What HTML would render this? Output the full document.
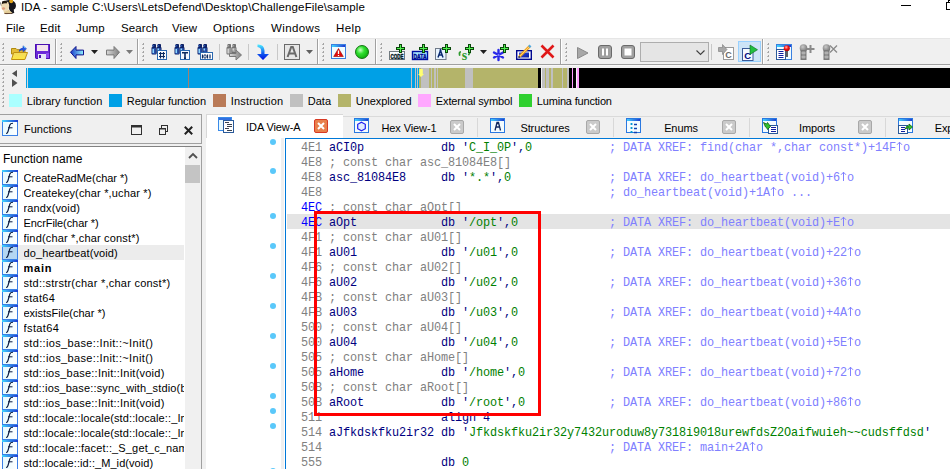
<!DOCTYPE html><html><head><meta charset="utf-8"><style>
*{margin:0;padding:0;box-sizing:border-box}
html,body{width:950px;height:469px;overflow:hidden;background:#f0f0f0;font-family:"Liberation Sans",sans-serif;color:#000}
.a{position:absolute}
.t{position:absolute;white-space:pre;line-height:1}
svg{position:absolute;overflow:visible}
.mono{font-family:"Liberation Mono",monospace}
</style></head><body><div class="a" style="left:0px;top:0px;width:950px;height:38px;background:#fff;"></div><svg style="left:0;top:0" width="18" height="16" viewBox="0 0 18 16"><path d="M5 1q5-2 9 0.5q2.5 2 1.8 5.5q-0.5 2-2 2.5q0 2 0.5 3.5l-3 0.5q-2-3-3-7z" fill="#16161c"/><path d="M0.5 2.5l1 3.5" stroke="#606060" stroke-width="1"/><ellipse cx="5.2" cy="6" rx="4" ry="5.2" fill="#eedab4"/><path d="M2 1.5q3-1.5 5.5 0l-1 2q-2-0.5-4.5 0.5z" fill="#201810"/><ellipse cx="3.5" cy="8.5" rx="1.6" ry="1.3" fill="#d88c70" opacity="0.8"/><path d="M3.5 11q3 1 5-1.5l4 3.5q-3 1.5-8 1z" fill="#e2cc96"/><path d="M4.5 13.5h8" stroke="#4a2a1a" stroke-width="0.8"/><circle cx="11.2" cy="1.3" r="1.9" fill="#e2a418"/></svg><div class="t" style="left:21px;top:1.5px;font-size:11.5px;color:#000;letter-spacing:0.15px">IDA - sample C:\Users\LetsDefend\Desktop\ChallengeFile\sample</div><div class="a" style="left:901px;top:5px;width:10px;height:1px;background:#000;"></div><svg style="left:946px;top:0" width="4" height="10"><rect x="2.5" y="0.5" width="8" height="7" fill="none" stroke="#000"/><rect x="0.5" y="2.5" width="8" height="7" fill="#fff" stroke="#000"/></svg><div class="t" style="left:6px;top:22.5px;font-size:11.5px;color:#000;letter-spacing:0.1px">File</div><div class="t" style="left:40px;top:22.5px;font-size:11.5px;color:#000;letter-spacing:0.2px">Edit</div><div class="t" style="left:76px;top:22.5px;font-size:11.5px;color:#000;letter-spacing:0.2px">Jump</div><div class="t" style="left:121px;top:22.5px;font-size:11.5px;color:#000;letter-spacing:0.1px">Search</div><div class="t" style="left:172px;top:22.5px;font-size:11.5px;color:#000;letter-spacing:0.1px">View</div><div class="t" style="left:213px;top:22.5px;font-size:11.5px;color:#000;letter-spacing:0.3px">Options</div><div class="t" style="left:271px;top:22.5px;font-size:11.5px;color:#000;letter-spacing:0.4px">Windows</div><div class="t" style="left:336px;top:22.5px;font-size:11.5px;color:#000;letter-spacing:0.45px">Help</div><div class="a" style="left:0px;top:38px;width:950px;height:1px;background:#e6e6e6;"></div><div class="a" style="left:0px;top:64px;width:950px;height:1px;background:#a0a0a0;"></div><div class="a" style="left:0px;top:65px;width:950px;height:1px;background:#f8f8f8;"></div><div class="a" style="left:3px;top:43px;width:1px;height:2px;background:#a4a4a4;"></div><div class="a" style="left:2px;top:44px;width:1px;height:1px;background:#b8b8b8;"></div><div class="a" style="left:3px;top:47px;width:1px;height:2px;background:#a4a4a4;"></div><div class="a" style="left:2px;top:48px;width:1px;height:1px;background:#b8b8b8;"></div><div class="a" style="left:3px;top:51px;width:1px;height:2px;background:#a4a4a4;"></div><div class="a" style="left:2px;top:52px;width:1px;height:1px;background:#b8b8b8;"></div><div class="a" style="left:3px;top:55px;width:1px;height:2px;background:#a4a4a4;"></div><div class="a" style="left:2px;top:56px;width:1px;height:1px;background:#b8b8b8;"></div><div class="a" style="left:3px;top:59px;width:1px;height:2px;background:#a4a4a4;"></div><div class="a" style="left:2px;top:60px;width:1px;height:1px;background:#b8b8b8;"></div><div class="a" style="left:61px;top:43px;width:1px;height:2px;background:#a4a4a4;"></div><div class="a" style="left:60px;top:44px;width:1px;height:1px;background:#b8b8b8;"></div><div class="a" style="left:61px;top:47px;width:1px;height:2px;background:#a4a4a4;"></div><div class="a" style="left:60px;top:48px;width:1px;height:1px;background:#b8b8b8;"></div><div class="a" style="left:61px;top:51px;width:1px;height:2px;background:#a4a4a4;"></div><div class="a" style="left:60px;top:52px;width:1px;height:1px;background:#b8b8b8;"></div><div class="a" style="left:61px;top:55px;width:1px;height:2px;background:#a4a4a4;"></div><div class="a" style="left:60px;top:56px;width:1px;height:1px;background:#b8b8b8;"></div><div class="a" style="left:61px;top:59px;width:1px;height:2px;background:#a4a4a4;"></div><div class="a" style="left:60px;top:60px;width:1px;height:1px;background:#b8b8b8;"></div><div class="a" style="left:143px;top:43px;width:1px;height:2px;background:#a4a4a4;"></div><div class="a" style="left:142px;top:44px;width:1px;height:1px;background:#b8b8b8;"></div><div class="a" style="left:143px;top:47px;width:1px;height:2px;background:#a4a4a4;"></div><div class="a" style="left:142px;top:48px;width:1px;height:1px;background:#b8b8b8;"></div><div class="a" style="left:143px;top:51px;width:1px;height:2px;background:#a4a4a4;"></div><div class="a" style="left:142px;top:52px;width:1px;height:1px;background:#b8b8b8;"></div><div class="a" style="left:143px;top:55px;width:1px;height:2px;background:#a4a4a4;"></div><div class="a" style="left:142px;top:56px;width:1px;height:1px;background:#b8b8b8;"></div><div class="a" style="left:143px;top:59px;width:1px;height:2px;background:#a4a4a4;"></div><div class="a" style="left:142px;top:60px;width:1px;height:1px;background:#b8b8b8;"></div><div class="a" style="left:323px;top:43px;width:1px;height:2px;background:#a4a4a4;"></div><div class="a" style="left:322px;top:44px;width:1px;height:1px;background:#b8b8b8;"></div><div class="a" style="left:323px;top:47px;width:1px;height:2px;background:#a4a4a4;"></div><div class="a" style="left:322px;top:48px;width:1px;height:1px;background:#b8b8b8;"></div><div class="a" style="left:323px;top:51px;width:1px;height:2px;background:#a4a4a4;"></div><div class="a" style="left:322px;top:52px;width:1px;height:1px;background:#b8b8b8;"></div><div class="a" style="left:323px;top:55px;width:1px;height:2px;background:#a4a4a4;"></div><div class="a" style="left:322px;top:56px;width:1px;height:1px;background:#b8b8b8;"></div><div class="a" style="left:323px;top:59px;width:1px;height:2px;background:#a4a4a4;"></div><div class="a" style="left:322px;top:60px;width:1px;height:1px;background:#b8b8b8;"></div><div class="a" style="left:381px;top:43px;width:1px;height:2px;background:#a4a4a4;"></div><div class="a" style="left:380px;top:44px;width:1px;height:1px;background:#b8b8b8;"></div><div class="a" style="left:381px;top:47px;width:1px;height:2px;background:#a4a4a4;"></div><div class="a" style="left:380px;top:48px;width:1px;height:1px;background:#b8b8b8;"></div><div class="a" style="left:381px;top:51px;width:1px;height:2px;background:#a4a4a4;"></div><div class="a" style="left:380px;top:52px;width:1px;height:1px;background:#b8b8b8;"></div><div class="a" style="left:381px;top:55px;width:1px;height:2px;background:#a4a4a4;"></div><div class="a" style="left:380px;top:56px;width:1px;height:1px;background:#b8b8b8;"></div><div class="a" style="left:381px;top:59px;width:1px;height:2px;background:#a4a4a4;"></div><div class="a" style="left:380px;top:60px;width:1px;height:1px;background:#b8b8b8;"></div><div class="a" style="left:566px;top:43px;width:1px;height:2px;background:#a4a4a4;"></div><div class="a" style="left:565px;top:44px;width:1px;height:1px;background:#b8b8b8;"></div><div class="a" style="left:566px;top:47px;width:1px;height:2px;background:#a4a4a4;"></div><div class="a" style="left:565px;top:48px;width:1px;height:1px;background:#b8b8b8;"></div><div class="a" style="left:566px;top:51px;width:1px;height:2px;background:#a4a4a4;"></div><div class="a" style="left:565px;top:52px;width:1px;height:1px;background:#b8b8b8;"></div><div class="a" style="left:566px;top:55px;width:1px;height:2px;background:#a4a4a4;"></div><div class="a" style="left:565px;top:56px;width:1px;height:1px;background:#b8b8b8;"></div><div class="a" style="left:566px;top:59px;width:1px;height:2px;background:#a4a4a4;"></div><div class="a" style="left:565px;top:60px;width:1px;height:1px;background:#b8b8b8;"></div><div class="a" style="left:768px;top:43px;width:1px;height:2px;background:#a4a4a4;"></div><div class="a" style="left:767px;top:44px;width:1px;height:1px;background:#b8b8b8;"></div><div class="a" style="left:768px;top:47px;width:1px;height:2px;background:#a4a4a4;"></div><div class="a" style="left:767px;top:48px;width:1px;height:1px;background:#b8b8b8;"></div><div class="a" style="left:768px;top:51px;width:1px;height:2px;background:#a4a4a4;"></div><div class="a" style="left:767px;top:52px;width:1px;height:1px;background:#b8b8b8;"></div><div class="a" style="left:768px;top:55px;width:1px;height:2px;background:#a4a4a4;"></div><div class="a" style="left:767px;top:56px;width:1px;height:1px;background:#b8b8b8;"></div><div class="a" style="left:768px;top:59px;width:1px;height:2px;background:#a4a4a4;"></div><div class="a" style="left:767px;top:60px;width:1px;height:1px;background:#b8b8b8;"></div><div class="a" style="left:55px;top:39px;width:1px;height:25px;background:#a0a0a0;"></div><div class="a" style="left:56px;top:39px;width:1px;height:25px;background:#ffffff;"></div><div class="a" style="left:137px;top:39px;width:1px;height:25px;background:#a0a0a0;"></div><div class="a" style="left:138px;top:39px;width:1px;height:25px;background:#ffffff;"></div><div class="a" style="left:317px;top:39px;width:1px;height:25px;background:#a0a0a0;"></div><div class="a" style="left:318px;top:39px;width:1px;height:25px;background:#ffffff;"></div><div class="a" style="left:375px;top:39px;width:1px;height:25px;background:#a0a0a0;"></div><div class="a" style="left:376px;top:39px;width:1px;height:25px;background:#ffffff;"></div><div class="a" style="left:560px;top:39px;width:1px;height:25px;background:#a0a0a0;"></div><div class="a" style="left:561px;top:39px;width:1px;height:25px;background:#ffffff;"></div><div class="a" style="left:762px;top:39px;width:1px;height:25px;background:#a0a0a0;"></div><div class="a" style="left:763px;top:39px;width:1px;height:25px;background:#ffffff;"></div><div class="a" style="left:219px;top:44px;width:1px;height:16px;background:#c8c8c8;"></div><div class="a" style="left:248px;top:44px;width:1px;height:16px;background:#c8c8c8;"></div><div class="a" style="left:277px;top:44px;width:1px;height:16px;background:#c8c8c8;"></div><div class="a" style="left:711px;top:44px;width:1px;height:16px;background:#c8c8c8;"></div><svg style="left:0;top:0" width="0" height="0"><defs><linearGradient id="gBack" x1="0" x2="1"><stop offset="0" stop-color="#1838c8"/><stop offset="1" stop-color="#90f4ff"/></linearGradient><linearGradient id="gFwd" x1="0" x2="1"><stop offset="0" stop-color="#d8d8d8"/><stop offset="1" stop-color="#808080"/></linearGradient><linearGradient id="gDown" x1="0" y1="0" x2="0" y2="1"><stop offset="0" stop-color="#50f0ff"/><stop offset="0.55" stop-color="#1060f0"/><stop offset="1" stop-color="#0010e0"/></linearGradient><linearGradient id="gTb" x1="0" x2="1"><stop offset="0" stop-color="#40d8ff"/><stop offset="1" stop-color="#2038d0"/></linearGradient><linearGradient id="gFold" x1="0" y1="0" x2="0" y2="1"><stop offset="0" stop-color="#f0d860"/><stop offset="1" stop-color="#ffe840"/></linearGradient><linearGradient id="gPen" x1="0" y1="0" x2="1" y2="1"><stop offset="0" stop-color="#3050e0"/><stop offset="1" stop-color="#0818a0"/></linearGradient><linearGradient id="gFi" x1="0" x2="1"><stop offset="0" stop-color="#e4faff"/><stop offset="1" stop-color="#ffffff"/></linearGradient><radialGradient id="gGreen" cx="0.38" cy="0.35" r="0.65"><stop offset="0" stop-color="#c8ffc0"/><stop offset="0.45" stop-color="#30e030"/><stop offset="1" stop-color="#10b010"/></radialGradient><radialGradient id="gPin" cx="0.4" cy="0.35" r="0.7"><stop offset="0" stop-color="#c8c8c8"/><stop offset="1" stop-color="#707070"/></radialGradient><radialGradient id="gRed" cx="0.4" cy="0.35" r="0.7"><stop offset="0" stop-color="#ffb0b0"/><stop offset="0.5" stop-color="#f01010"/><stop offset="1" stop-color="#a00000"/></radialGradient></defs></svg><svg style="left:11px;top:44px" width="17" height="16" viewBox="0 0 17 16"><path d="M0.5 4.5h4.5l1 1.2h8v4.3h-13.5z" fill="#e4bc38" stroke="#b08a10"/><path d="M0.5 15.5l2.2-7h13.8l-2.6 7z" fill="url(#gFold)" stroke="#c09010" stroke-linejoin="round"/><path d="M8 7.5q0.5-3.2 4-3.4v-2.3l3.5 3-3.5 3v-2q-2.5 0-4 1.7z" fill="#2858e8" stroke="#1030b0" stroke-width="0.5"/><path d="M12.5 2.5l1.8 1.5" stroke="#60e0ff" stroke-width="1"/></svg><svg style="left:35px;top:44px" width="16" height="16" viewBox="0 0 16 16"><path d="M0 0h15v15h-14l-1-1z" fill="#6a28d8"/><path d="M0.5 0.5h14v14h-13l-1-1z" fill="none" stroke="#4a10b0"/><rect x="2" y="1" width="11" height="6" fill="#f4e4ec"/><rect x="3" y="10" width="8" height="5" fill="#e4e4f8"/><rect x="4" y="11" width="2" height="3" fill="#4a10b0"/><rect x="11" y="9" width="3" height="5" fill="#8a48f0"/></svg><svg style="left:70px;top:46px" width="14" height="13" viewBox="0 0 14 13"><path d="M0.5 6.2l5.5-5.7v3.6h7.5v4.8h-7.5v3.6z" fill="url(#gBack)" stroke="#10108a" stroke-linejoin="round"/></svg><svg style="left:91px;top:50px" width="8" height="5" viewBox="0 0 8 5"><path d="M0 0h7l-3.5 4z" fill="#202020"/></svg><svg style="left:106px;top:46px" width="14" height="13" viewBox="0 0 14 13"><path d="M13.5 6.2l-5.5-5.7v3.6h-7.5v4.8h7.5v3.6z" fill="url(#gFwd)" stroke="#787878" stroke-linejoin="round"/></svg><svg style="left:126px;top:50px" width="8" height="5" viewBox="0 0 8 5"><path d="M0 0h7l-3.5 4z" fill="#7a7a7a"/></svg><svg style="left:151px;top:44px" width="16" height="16" viewBox="0 0 16 16"><rect x="1.5" y="0" width="3.5" height="3.5" rx="0.8" fill="#0c2064"/><rect x="6.5" y="0" width="3.5" height="3.5" rx="0.8" fill="#0c2064"/><rect x="1.2" y="1" width="2" height="1.5" fill="#2850a8"/><rect x="6.2" y="1" width="2" height="1.5" fill="#2850a8"/><rect x="0.5" y="3" width="5" height="7.5" rx="1" fill="#0c2064"/><rect x="5.5" y="3" width="5" height="7" rx="1" fill="#0c2064"/><rect x="1.3" y="4" width="3.5" height="6" rx="0.5" fill="#2850a8"/><rect x="6.3" y="4" width="3.5" height="4" rx="0.5" fill="#2850a8"/><rect x="1.5" y="5" width="1.5" height="4" fill="#90d8ff"/><rect x="6.5" y="4.5" width="1.5" height="2" fill="#90d8ff"/><rect x="6.5" y="6.5" width="9" height="9" fill="#fff" stroke="#2a68b0"/><path d="M9.5 8v6.5M12.5 8v6.5M8 9.5h6M8 12.5h6" stroke="#0c2a60" stroke-width="1.2"/></svg><svg style="left:174px;top:44px" width="16" height="16" viewBox="0 0 16 16"><rect x="1.5" y="0" width="3.5" height="3.5" rx="0.8" fill="#0c2064"/><rect x="6.5" y="0" width="3.5" height="3.5" rx="0.8" fill="#0c2064"/><rect x="1.2" y="1" width="2" height="1.5" fill="#2850a8"/><rect x="6.2" y="1" width="2" height="1.5" fill="#2850a8"/><rect x="0.5" y="3" width="5" height="7.5" rx="1" fill="#0c2064"/><rect x="5.5" y="3" width="5" height="7" rx="1" fill="#0c2064"/><rect x="1.3" y="4" width="3.5" height="6" rx="0.5" fill="#2850a8"/><rect x="6.3" y="4" width="3.5" height="4" rx="0.5" fill="#2850a8"/><rect x="1.5" y="5" width="1.5" height="4" fill="#90d8ff"/><rect x="6.5" y="4.5" width="1.5" height="2" fill="#90d8ff"/><rect x="6.5" y="6.5" width="9" height="9" fill="#f4f8ff" stroke="#2a68b0"/><path d="M8 8.8h6M11 8.8v5.5M10 14.3h2" stroke="#0c2a60" stroke-width="1.6"/></svg><svg style="left:197px;top:44px" width="16" height="16" viewBox="0 0 16 16"><rect x="1.5" y="0" width="3.5" height="3.5" rx="0.8" fill="#0c2064"/><rect x="6.5" y="0" width="3.5" height="3.5" rx="0.8" fill="#0c2064"/><rect x="1.2" y="1" width="2" height="1.5" fill="#2850a8"/><rect x="6.2" y="1" width="2" height="1.5" fill="#2850a8"/><rect x="0.5" y="3" width="5" height="7.5" rx="1" fill="#0c2064"/><rect x="5.5" y="3" width="5" height="7" rx="1" fill="#0c2064"/><rect x="1.3" y="4" width="3.5" height="6" rx="0.5" fill="#2850a8"/><rect x="6.3" y="4" width="3.5" height="4" rx="0.5" fill="#2850a8"/><rect x="1.5" y="5" width="1.5" height="4" fill="#90d8ff"/><rect x="6.5" y="4.5" width="1.5" height="2" fill="#90d8ff"/><rect x="3.5" y="8.5" width="12" height="7" fill="#fff" stroke="#2a68b0"/><path d="M5.5 10.5v4M10.5 10.5v4M13 10.5v4" stroke="#0c2a60" stroke-width="1.2"/><ellipse cx="8" cy="12.5" rx="1.2" ry="1.8" fill="none" stroke="#0c2a60" stroke-width="1"/></svg><svg style="left:226px;top:44px" width="16" height="16" viewBox="0 0 16 16"><rect x="1.5" y="0" width="3.5" height="3.5" rx="0.8" fill="#707070"/><rect x="6.5" y="0" width="3.5" height="3.5" rx="0.8" fill="#707070"/><rect x="1.2" y="1" width="2" height="1.5" fill="#a0a0a0"/><rect x="6.2" y="1" width="2" height="1.5" fill="#a0a0a0"/><rect x="0.5" y="3" width="5" height="7.5" rx="1" fill="#707070"/><rect x="5.5" y="3" width="5" height="7" rx="1" fill="#707070"/><rect x="1.3" y="4" width="3.5" height="6" rx="0.5" fill="#a0a0a0"/><rect x="6.3" y="4" width="3.5" height="4" rx="0.5" fill="#a0a0a0"/><rect x="1.5" y="5" width="1.5" height="4" fill="#d0d0d0"/><rect x="6.5" y="4.5" width="1.5" height="2" fill="#d0d0d0"/><path d="M3.5 9.5h6.5v-3.5l5.5 5-5.5 5v-3.5h-6.5z" fill="url(#gFwd)" stroke="#787878" stroke-linejoin="round"/></svg><svg style="left:257px;top:44px" width="13" height="16" viewBox="0 0 13 16"><path d="M0.5 0.5q6.5-0.5 7 6v3.5h4.5l-6 6-6-6h4.2v-3q0-3.5-3.7-4z" fill="url(#gDown)"/></svg><svg style="left:284px;top:44px" width="16" height="16" viewBox="0 0 16 16"><rect x="0.5" y="0.5" width="15" height="15" fill="#e6e6e6" stroke="#6a6a6a"/><path d="M3.6 13l3.6-10h1.6l3.6 10M5.2 9.6h5.6" stroke="#6a6a6a" stroke-width="2" fill="none"/></svg><svg style="left:306px;top:50px" width="8" height="5" viewBox="0 0 8 5"><path d="M0 0h7l-3.5 4z" fill="#606060"/></svg><svg style="left:331px;top:44px" width="16" height="15" viewBox="0 0 16 15"><rect x="0.5" y="0.5" width="14" height="14" fill="#f0fcff" stroke="#3a80e0"/><rect x="1" y="1" width="13" height="2" fill="url(#gTb)"/><path d="M7.5 4.5l4.8 8h-9.6z" fill="#e00c0c" stroke="#a00000" stroke-width="0.6" stroke-linejoin="round"/><path d="M7.5 6.5v3.5M7.5 11v1" stroke="#fff" stroke-width="1.3"/></svg><svg style="left:355px;top:45px" width="14" height="14" viewBox="0 0 14 14"><circle cx="7" cy="7" r="6.5" fill="url(#gGreen)" stroke="#0a6a0a" stroke-width="0.9"/></svg><svg style="left:389px;top:44px" width="17" height="16" viewBox="0 0 17 16"><rect x="0.5" y="7.5" width="15" height="8" fill="#f8fcff" stroke="#707a80"/><text x="8" y="14.5" font-size="8" font-weight="bold" text-anchor="middle" fill="#062028" stroke="#062028" stroke-width="0.5" font-family="Liberation Sans" textLength="13" lengthAdjust="spacingAndGlyphs">CODE</text><rect x="10" y="0" width="3" height="9" fill="#0a480a"/><rect x="7" y="3" width="9" height="3" fill="#0a480a"/><rect x="11" y="1" width="1" height="7" fill="#50f050"/><rect x="8" y="4" width="7" height="1" fill="#50f050"/></svg><svg style="left:412px;top:44px" width="17" height="16" viewBox="0 0 17 16"><rect x="0.5" y="7.5" width="15" height="8" fill="#a8e8ff" stroke="#0010a0" stroke-width="1.4"/><text x="8" y="14.5" font-size="8" font-weight="bold" text-anchor="middle" fill="#000890" stroke="#000890" stroke-width="0.5" font-family="Liberation Sans" textLength="13" lengthAdjust="spacingAndGlyphs">DATA</text><rect x="10" y="0" width="3" height="9" fill="#0a480a"/><rect x="7" y="3" width="9" height="3" fill="#0a480a"/><rect x="11" y="1" width="1" height="7" fill="#50f050"/><rect x="8" y="4" width="7" height="1" fill="#50f050"/></svg><svg style="left:435px;top:44px" width="17" height="16" viewBox="0 0 17 16"><rect x="0.5" y="4.5" width="10.5" height="11" fill="#e8f4ff" stroke="#707a88"/><path d="M3 13.5l2.5-7 2.5 7M3.8 11h3.4" stroke="#0c2a70" stroke-width="1.5" fill="none"/><circle cx="5.5" cy="6" r="1" fill="#0c2a70"/><rect x="10" y="0" width="3" height="9" fill="#0a480a"/><rect x="7" y="3" width="9" height="3" fill="#0a480a"/><rect x="11" y="1" width="1" height="7" fill="#50f050"/><rect x="8" y="4" width="7" height="1" fill="#50f050"/></svg><svg style="left:458px;top:44px" width="17" height="16" viewBox="0 0 17 16"><text x="6.5" y="16" font-size="14" font-weight="bold" text-anchor="middle" fill="#2e9a2e" font-family="Liberation Serif">s</text><path d="M2.2 8q-1.3 0.8-0.6 3" stroke="#2e9a2e" stroke-width="1.8" fill="none" stroke-linecap="round"/><path d="M11.6 7.5q0.8 1.8-0.8 3" stroke="#2e9a2e" stroke-width="1.8" fill="none" stroke-linecap="round"/><rect x="10" y="0" width="3" height="9" fill="#0a480a"/><rect x="7" y="3" width="9" height="3" fill="#0a480a"/><rect x="11" y="1" width="1" height="7" fill="#50f050"/><rect x="8" y="4" width="7" height="1" fill="#50f050"/></svg><svg style="left:480px;top:50px" width="8" height="5" viewBox="0 0 8 5"><path d="M0 0h7l-3.5 4z" fill="#202020"/></svg><svg style="left:493px;top:44px" width="17" height="16" viewBox="0 0 17 16"><path d="M5.5 6v10M1 8.5l9 5M1 13.5l9-5" stroke="#2a2ae8" stroke-width="2.4" stroke-linecap="round"/><circle cx="5.5" cy="11" r="1" fill="#8080ff"/><rect x="10" y="0" width="3" height="9" fill="#0a480a"/><rect x="7" y="3" width="9" height="3" fill="#0a480a"/><rect x="11" y="1" width="1" height="7" fill="#50f050"/><rect x="8" y="4" width="7" height="1" fill="#50f050"/></svg><svg style="left:516px;top:44px" width="16" height="16" viewBox="0 0 16 16"><rect x="0.7" y="6.7" width="14.6" height="8.6" fill="#fff" stroke="#000890" stroke-width="1.4"/><rect x="3" y="8.5" width="10" height="5" fill="url(#gPen)"/><path d="M3.5 12.5l10-10" stroke="#f0a020" stroke-width="2.6"/><path d="M3.5 12.5l10-10" stroke="#ffe080" stroke-width="0.8"/><path d="M13 3l1.5-1.5" stroke="#50a8e0" stroke-width="2.6"/><path d="M2.5 13.5l1-1" stroke="#000" stroke-width="1.5"/></svg><svg style="left:540px;top:44px" width="15" height="15" viewBox="0 0 15 15"><path d="M1.5 1.5l12 12M13.5 1.5l-12 12" stroke="#e01818" stroke-width="2.6"/></svg><svg style="left:577px;top:47px" width="12" height="12" viewBox="0 0 12 12"><path d="M0.5 0.5l10.5 5.5-10.5 5.5z" fill="#a8a8a8" stroke="#8a8a8a"/></svg><svg style="left:598px;top:45px" width="14" height="14" viewBox="0 0 14 14"><rect x="0.5" y="0.5" width="13" height="13" rx="2.5" fill="#a0a0a0" stroke="#6a6a6a"/><rect x="4" y="3.5" width="2" height="7" fill="#fff"/><rect x="8" y="3.5" width="2" height="7" fill="#fff"/></svg><svg style="left:621px;top:45px" width="14" height="14" viewBox="0 0 14 14"><rect x="0.5" y="0.5" width="13" height="13" rx="2.5" fill="#a0a0a0" stroke="#6a6a6a"/><rect x="3.5" y="3.5" width="7" height="7" fill="#fff"/></svg><div class="a" style="left:640px;top:42px;width:69px;height:20px;background:#e5e5e5;border:1px solid #adadad"></div><svg style="left:696px;top:50px" width="9" height="6" viewBox="0 0 9 6"><path d="M0.5 0.5l4 4 4-4" stroke="#404040" fill="none" stroke-width="1.1"/></svg><svg style="left:718px;top:44px" width="16" height="16" viewBox="0 0 16 16"><rect x="5.5" y="3.5" width="10" height="12" fill="#fff" stroke="#9a9a9a"/><text x="10.5" y="13.5" font-size="9" font-weight="bold" text-anchor="middle" fill="#6a6a6a" font-family="Liberation Sans">C</text><path d="M0.5 3.5h4v-3l4.5 5-4.5 5v-3h-4z" fill="#a8a8a8" stroke="#787878" stroke-width="0.6"/></svg><div class="a" style="left:738px;top:41px;width:23px;height:21px;background:#cce4f7;border:1px solid #99d1ff"></div><svg style="left:742px;top:44px" width="16" height="17" viewBox="0 0 16 17"><rect x="0.5" y="4.5" width="10.5" height="12" fill="#f4faff" stroke="#3a5a98"/><text x="5.8" y="14.5" font-size="9.5" font-weight="bold" text-anchor="middle" fill="#000a80" font-family="Liberation Sans">C</text><path d="M8 1v9.5l7.5-4.75z" fill="#20c040" stroke="#0a6a1a" stroke-width="0.6"/></svg><svg style="left:776px;top:44px" width="16" height="16" viewBox="0 0 16 16"><rect x="0.5" y="0.5" width="15" height="15" fill="#f0fcff" stroke="#3a80e0"/><rect x="1" y="1" width="14" height="2" fill="url(#gTb)"/><rect x="0.5" y="5.5" width="9" height="10" fill="#fff" stroke="#2a5a9a"/><path d="M2.5 7.5h5M2.5 9.5h5M2.5 11.5h5M2.5 13.5h5" stroke="#1020a0"/><rect x="9.5" y="6" width="2.5" height="7" fill="#606060"/><circle cx="10.8" cy="4.2" r="3" fill="url(#gRed)"/></svg><svg style="left:799px;top:44px" width="17" height="16" viewBox="0 0 17 16"><circle cx="4.5" cy="4" r="3.8" fill="url(#gPin)"/><rect x="1.5" y="6" width="6" height="10" fill="#7a7a7a"/><rect x="2.5" y="7.5" width="4" height="3" rx="1" fill="#b0b0b0"/><rect x="2.5" y="11.5" width="4" height="3" rx="1" fill="#b0b0b0"/><path d="M11.5 1v8M7.5 5h8" stroke="#8a8a8a" stroke-width="2"/></svg><svg style="left:822px;top:44px" width="17" height="16" viewBox="0 0 17 16"><circle cx="4.5" cy="4" r="3.8" fill="url(#gPin)"/><rect x="1.5" y="6" width="6" height="10" fill="#7a7a7a"/><rect x="2.5" y="7.5" width="4" height="3" rx="1" fill="#b0b0b0"/><rect x="2.5" y="11.5" width="4" height="3" rx="1" fill="#b0b0b0"/><path d="M8 1.5l7 7M15 1.5l-7 7" stroke="#8a8a8a" stroke-width="1.3"/></svg><svg style="left:11px;top:70px" width="8" height="18"><path d="M6 0v7l-5-3.5z" fill="#505050"/><path d="M1 9v8l5.5-4z" fill="#505050"/></svg><div class="a" style="left:3px;top:69px;width:1px;height:2px;background:#a4a4a4;"></div><div class="a" style="left:2px;top:70px;width:1px;height:1px;background:#b8b8b8;"></div><div class="a" style="left:3px;top:73px;width:1px;height:2px;background:#a4a4a4;"></div><div class="a" style="left:2px;top:74px;width:1px;height:1px;background:#b8b8b8;"></div><div class="a" style="left:3px;top:77px;width:1px;height:2px;background:#a4a4a4;"></div><div class="a" style="left:2px;top:78px;width:1px;height:1px;background:#b8b8b8;"></div><div class="a" style="left:3px;top:81px;width:1px;height:2px;background:#a4a4a4;"></div><div class="a" style="left:2px;top:82px;width:1px;height:1px;background:#b8b8b8;"></div><div class="a" style="left:3px;top:85px;width:1px;height:2px;background:#a4a4a4;"></div><div class="a" style="left:2px;top:86px;width:1px;height:1px;background:#b8b8b8;"></div><div class="a" style="left:3px;top:89px;width:1px;height:2px;background:#a4a4a4;"></div><div class="a" style="left:2px;top:90px;width:1px;height:1px;background:#b8b8b8;"></div><div class="a" style="left:3px;top:93px;width:1px;height:2px;background:#a4a4a4;"></div><div class="a" style="left:2px;top:94px;width:1px;height:1px;background:#b8b8b8;"></div><div class="a" style="left:3px;top:97px;width:1px;height:2px;background:#a4a4a4;"></div><div class="a" style="left:2px;top:98px;width:1px;height:1px;background:#b8b8b8;"></div><div class="a" style="left:3px;top:101px;width:1px;height:2px;background:#a4a4a4;"></div><div class="a" style="left:2px;top:102px;width:1px;height:1px;background:#b8b8b8;"></div><div class="a" style="left:3px;top:105px;width:1px;height:2px;background:#a4a4a4;"></div><div class="a" style="left:2px;top:106px;width:1px;height:1px;background:#b8b8b8;"></div><div class="a" style="left:26px;top:68px;width:1px;height:20px;background:#00a0e6;"></div><div class="a" style="left:27px;top:68px;width:1px;height:20px;background:#d8d8d8;"></div><div class="a" style="left:28px;top:68px;width:160px;height:20px;background:#00a0e6;"></div><div class="a" style="left:188px;top:68px;width:1px;height:20px;background:#a08070;"></div><div class="a" style="left:189px;top:68px;width:222px;height:20px;background:#00a0e6;"></div><div class="a" style="left:411px;top:68px;width:1px;height:20px;background:#c0c0c0;"></div><div class="a" style="left:412px;top:68px;width:3px;height:20px;background:#00a0e6;"></div><div class="a" style="left:415px;top:68px;width:1px;height:20px;background:#c0c0c0;"></div><div class="a" style="left:416px;top:68px;width:1px;height:20px;background:#00a0e6;"></div><div class="a" style="left:417px;top:68px;width:1px;height:20px;background:#c0c0c0;"></div><div class="a" style="left:418px;top:68px;width:1px;height:20px;background:#00a0e6;"></div><div class="a" style="left:419px;top:68px;width:2px;height:20px;background:#b4b46a;"></div><div class="a" style="left:421px;top:68px;width:8px;height:20px;background:#c0c0c0;"></div><div class="a" style="left:429px;top:68px;width:2px;height:20px;background:#b4b46a;"></div><div class="a" style="left:431px;top:68px;width:1px;height:20px;background:#c0c0c0;"></div><div class="a" style="left:432px;top:68px;width:2px;height:20px;background:#b4b46a;"></div><div class="a" style="left:434px;top:68px;width:2px;height:20px;background:#c0c0c0;"></div><div class="a" style="left:436px;top:68px;width:1px;height:20px;background:#b4b46a;"></div><div class="a" style="left:437px;top:68px;width:1px;height:20px;background:#c0c0c0;"></div><div class="a" style="left:438px;top:68px;width:27px;height:20px;background:#b4b46a;"></div><div class="a" style="left:465px;top:68px;width:8px;height:20px;background:#c0c0c0;"></div><div class="a" style="left:473px;top:68px;width:65px;height:20px;background:#b4b46a;"></div><div class="a" style="left:538px;top:68px;width:3px;height:20px;background:#000;"></div><div class="a" style="left:541px;top:68px;width:1px;height:20px;background:#f4f4f4;"></div><div class="a" style="left:542px;top:68px;width:3px;height:20px;background:#c0c0c0;"></div><div class="a" style="left:545px;top:68px;width:1px;height:20px;background:#b4b46a;"></div><div class="a" style="left:546px;top:68px;width:3px;height:20px;background:#c0c0c0;"></div><div class="a" style="left:549px;top:68px;width:2px;height:20px;background:#b4b46a;"></div><div class="a" style="left:551px;top:68px;width:2px;height:20px;background:#c0c0c0;"></div><div class="a" style="left:553px;top:68px;width:9px;height:20px;background:#b4b46a;"></div><div class="a" style="left:562px;top:68px;width:1px;height:20px;background:#c0c0c0;"></div><div class="a" style="left:563px;top:68px;width:4px;height:20px;background:#b4b46a;"></div><div class="a" style="left:567px;top:68px;width:2px;height:20px;background:#c0c0c0;"></div><div class="a" style="left:569px;top:68px;width:3px;height:20px;background:#000;"></div><div class="a" style="left:572px;top:68px;width:1px;height:20px;background:#ff9cff;"></div><div class="a" style="left:573px;top:68px;width:3px;height:20px;background:#000;"></div><div class="a" style="left:576px;top:68px;width:1px;height:20px;background:#f4f4f4;"></div><div class="a" style="left:577px;top:68px;width:2px;height:20px;background:#ff9cff;"></div><div class="a" style="left:579px;top:68px;width:371px;height:20px;background:#000;"></div><svg style="left:418px;top:69px" width="6" height="9"><path d="M1.2 0h3.6v5h1.2l-3 3-3-3h1.2z" fill="#ffff70"/></svg><div class="a" style="left:9px;top:94px;width:13px;height:13px;background:#aaffff;"></div><div class="t" style="left:26.8px;top:95.7px;font-size:11px;color:#000;letter-spacing:0.02px">Library function</div><div class="a" style="left:109px;top:94px;width:13px;height:13px;background:#00a0e6;"></div><div class="t" style="left:126.8px;top:95.7px;font-size:11px;color:#000;letter-spacing:-0.06px">Regular function</div><div class="a" style="left:213px;top:94px;width:13px;height:13px;background:#b97a57;"></div><div class="t" style="left:230.8px;top:95.7px;font-size:11px;color:#000;letter-spacing:0.15px">Instruction</div><div class="a" style="left:290px;top:94px;width:13px;height:13px;background:#c0c0c0;"></div><div class="t" style="left:307.8px;top:95.7px;font-size:11px;color:#000;letter-spacing:0px">Data</div><div class="a" style="left:338px;top:94px;width:13px;height:13px;background:#b4b46a;"></div><div class="t" style="left:355.8px;top:95.7px;font-size:11px;color:#000;letter-spacing:-0.05px">Unexplored</div><div class="a" style="left:418px;top:94px;width:13px;height:13px;background:#ffa8ff;"></div><div class="t" style="left:435.8px;top:95.7px;font-size:11px;color:#000;letter-spacing:-0.11px">External symbol</div><div class="a" style="left:519px;top:94px;width:13px;height:13px;background:#30d030;"></div><div class="t" style="left:536.8px;top:95.7px;font-size:11px;color:#000;letter-spacing:-0.18px">Lumina function</div><div class="a" style="left:0px;top:114px;width:202px;height:1px;background:#a0a0a0;"></div><div class="a" style="left:201px;top:114px;width:1px;height:355px;background:#a0a0a0;"></div><div class="a" style="left:0px;top:143px;width:201px;height:1px;background:#a0a0a0;"></div><div class="a" style="left:0px;top:146px;width:201px;height:1px;background:#828282;"></div><div class="a" style="left:0px;top:147px;width:201px;height:322px;background:#fff;"></div><svg style="left:2px;top:120px" width="16" height="16" viewBox="0 0 16 16"><rect x="0" y="0" width="16" height="16" fill="url(#gFi)"/><path d="M0.5 0v16M15.5 0v16M0 15.5h16" stroke="#3a80e6"/><rect x="0" y="0" width="16" height="2" fill="url(#gTb)"/><path d="M4 13.5q1.5 0 2-2l1.8-6.5q0.6-1.8 3.2-1.8" stroke="#0a1a40" stroke-width="1.15" fill="none"/><path d="M6 7.800000000000001h4.5" stroke="#0a1a40" stroke-width="1"/></svg><div class="t" style="left:24px;top:124px;font-size:11px;color:#000;">Functions</div><svg style="left:131px;top:125px" width="11" height="10"><rect x="0.5" y="0.5" width="10" height="9" fill="none" stroke="#303030"/><rect x="0" y="0" width="11" height="2.5" fill="#303030"/></svg><svg style="left:159px;top:125px" width="9" height="10"><rect x="2.5" y="0.5" width="6" height="6" fill="none" stroke="#303030"/><rect x="0.5" y="3.5" width="6" height="6" fill="#f0f0f0" stroke="#303030"/><rect x="0" y="3" width="7" height="1.5" fill="#303030"/></svg><svg style="left:184px;top:126px" width="9" height="9"><path d="M0.8 0.8l7.4 7.4M8.2 0.8l-7.4 7.4" stroke="#202020" stroke-width="2"/></svg><div class="t" style="left:3px;top:153px;font-size:12px;color:#000;">Function name</div><svg style="left:2px;top:170px" width="16" height="15" viewBox="0 0 16 15"><rect x="0" y="0" width="16" height="15" fill="url(#gFi)"/><path d="M0.5 0v15M15.5 0v15M0 14.5h16" stroke="#3a80e6"/><rect x="0" y="0" width="16" height="2" fill="url(#gTb)"/><path d="M4 12.5q1.5 0 2-2l1.8-6.5q0.6-1.8 3.2-1.8" stroke="#0a1a40" stroke-width="1.15" fill="none"/><path d="M6 6.800000000000001h4.5" stroke="#0a1a40" stroke-width="1"/></svg><div class="t" style="left:23.5px;top:172.7px;font-size:11px;width:160.5px;overflow:hidden;letter-spacing:0px;">CreateRadMe(char *)</div><svg style="left:2px;top:185px" width="16" height="15" viewBox="0 0 16 15"><rect x="0" y="0" width="16" height="15" fill="url(#gFi)"/><path d="M0.5 0v15M15.5 0v15M0 14.5h16" stroke="#3a80e6"/><rect x="0" y="0" width="16" height="2" fill="url(#gTb)"/><path d="M4 12.5q1.5 0 2-2l1.8-6.5q0.6-1.8 3.2-1.8" stroke="#0a1a40" stroke-width="1.15" fill="none"/><path d="M6 6.800000000000001h4.5" stroke="#0a1a40" stroke-width="1"/></svg><div class="t" style="left:23.5px;top:187.7px;font-size:11px;width:160.5px;overflow:hidden;letter-spacing:0.16px;">Createkey(char *,uchar *)</div><svg style="left:2px;top:200px" width="16" height="15" viewBox="0 0 16 15"><rect x="0" y="0" width="16" height="15" fill="url(#gFi)"/><path d="M0.5 0v15M15.5 0v15M0 14.5h16" stroke="#3a80e6"/><rect x="0" y="0" width="16" height="2" fill="url(#gTb)"/><path d="M4 12.5q1.5 0 2-2l1.8-6.5q0.6-1.8 3.2-1.8" stroke="#0a1a40" stroke-width="1.15" fill="none"/><path d="M6 6.800000000000001h4.5" stroke="#0a1a40" stroke-width="1"/></svg><div class="t" style="left:23.5px;top:202.7px;font-size:11px;width:160.5px;overflow:hidden;letter-spacing:0.13px;">randx(void)</div><svg style="left:2px;top:215px" width="16" height="15" viewBox="0 0 16 15"><rect x="0" y="0" width="16" height="15" fill="url(#gFi)"/><path d="M0.5 0v15M15.5 0v15M0 14.5h16" stroke="#3a80e6"/><rect x="0" y="0" width="16" height="2" fill="url(#gTb)"/><path d="M4 12.5q1.5 0 2-2l1.8-6.5q0.6-1.8 3.2-1.8" stroke="#0a1a40" stroke-width="1.15" fill="none"/><path d="M6 6.800000000000001h4.5" stroke="#0a1a40" stroke-width="1"/></svg><div class="t" style="left:23.5px;top:217.7px;font-size:11px;width:160.5px;overflow:hidden;letter-spacing:-0.09px;">EncrFile(char *)</div><svg style="left:2px;top:230px" width="16" height="15" viewBox="0 0 16 15"><rect x="0" y="0" width="16" height="15" fill="url(#gFi)"/><path d="M0.5 0v15M15.5 0v15M0 14.5h16" stroke="#3a80e6"/><rect x="0" y="0" width="16" height="2" fill="url(#gTb)"/><path d="M4 12.5q1.5 0 2-2l1.8-6.5q0.6-1.8 3.2-1.8" stroke="#0a1a40" stroke-width="1.15" fill="none"/><path d="M6 6.800000000000001h4.5" stroke="#0a1a40" stroke-width="1"/></svg><div class="t" style="left:23.5px;top:232.7px;font-size:11px;width:160.5px;overflow:hidden;letter-spacing:0.17px;">find(char *,char const*)</div><div class="a" style="left:0px;top:245px;width:184px;height:15px;background:#ececec;"></div><svg style="left:2px;top:245px" width="16" height="15" viewBox="0 0 16 15"><rect x="0" y="0" width="16" height="15" fill="#b4d6f2"/><path d="M0.5 0v15M15.5 0v15M0 14.5h16" stroke="#3a80e6"/><rect x="0" y="0" width="16" height="2" fill="url(#gTb)"/><path d="M4 12.5q1.5 0 2-2l1.8-6.5q0.6-1.8 3.2-1.8" stroke="#0a1a40" stroke-width="1.15" fill="none"/><path d="M6 6.800000000000001h4.5" stroke="#0a1a40" stroke-width="1"/></svg><div class="t" style="left:23.5px;top:247.7px;font-size:11px;width:160.5px;overflow:hidden;letter-spacing:0.11px;">do_heartbeat(void)</div><svg style="left:2px;top:260px" width="16" height="15" viewBox="0 0 16 15"><rect x="0" y="0" width="16" height="15" fill="url(#gFi)"/><path d="M0.5 0v15M15.5 0v15M0 14.5h16" stroke="#3a80e6"/><rect x="0" y="0" width="16" height="2" fill="url(#gTb)"/><path d="M4 12.5q1.5 0 2-2l1.8-6.5q0.6-1.8 3.2-1.8" stroke="#0a1a40" stroke-width="1.15" fill="none"/><path d="M6 6.800000000000001h4.5" stroke="#0a1a40" stroke-width="1"/></svg><div class="t" style="left:23.5px;top:262.7px;font-size:11px;width:160.5px;overflow:hidden;letter-spacing:0.8px;font-weight:bold;">main</div><svg style="left:2px;top:275px" width="16" height="15" viewBox="0 0 16 15"><rect x="0" y="0" width="16" height="15" fill="url(#gFi)"/><path d="M0.5 0v15M15.5 0v15M0 14.5h16" stroke="#3a80e6"/><rect x="0" y="0" width="16" height="2" fill="url(#gTb)"/><path d="M4 12.5q1.5 0 2-2l1.8-6.5q0.6-1.8 3.2-1.8" stroke="#0a1a40" stroke-width="1.15" fill="none"/><path d="M6 6.800000000000001h4.5" stroke="#0a1a40" stroke-width="1"/></svg><div class="t" style="left:23.5px;top:277.7px;font-size:11px;width:160.5px;overflow:hidden;letter-spacing:0.24px;">std::strstr(char *,char const*)</div><svg style="left:2px;top:290px" width="16" height="15" viewBox="0 0 16 15"><rect x="0" y="0" width="16" height="15" fill="url(#gFi)"/><path d="M0.5 0v15M15.5 0v15M0 14.5h16" stroke="#3a80e6"/><rect x="0" y="0" width="16" height="2" fill="url(#gTb)"/><path d="M4 12.5q1.5 0 2-2l1.8-6.5q0.6-1.8 3.2-1.8" stroke="#0a1a40" stroke-width="1.15" fill="none"/><path d="M6 6.800000000000001h4.5" stroke="#0a1a40" stroke-width="1"/></svg><div class="t" style="left:23.5px;top:292.7px;font-size:11px;width:160.5px;overflow:hidden;letter-spacing:0.27px;">stat64</div><svg style="left:2px;top:305px" width="16" height="15" viewBox="0 0 16 15"><rect x="0" y="0" width="16" height="15" fill="url(#gFi)"/><path d="M0.5 0v15M15.5 0v15M0 14.5h16" stroke="#3a80e6"/><rect x="0" y="0" width="16" height="2" fill="url(#gTb)"/><path d="M4 12.5q1.5 0 2-2l1.8-6.5q0.6-1.8 3.2-1.8" stroke="#0a1a40" stroke-width="1.15" fill="none"/><path d="M6 6.800000000000001h4.5" stroke="#0a1a40" stroke-width="1"/></svg><div class="t" style="left:23.5px;top:307.7px;font-size:11px;width:160.5px;overflow:hidden;letter-spacing:0px;">existsFile(char *)</div><svg style="left:2px;top:320px" width="16" height="15" viewBox="0 0 16 15"><rect x="0" y="0" width="16" height="15" fill="url(#gFi)"/><path d="M0.5 0v15M15.5 0v15M0 14.5h16" stroke="#3a80e6"/><rect x="0" y="0" width="16" height="2" fill="url(#gTb)"/><path d="M4 12.5q1.5 0 2-2l1.8-6.5q0.6-1.8 3.2-1.8" stroke="#0a1a40" stroke-width="1.15" fill="none"/><path d="M6 6.800000000000001h4.5" stroke="#0a1a40" stroke-width="1"/></svg><div class="t" style="left:23.5px;top:322.7px;font-size:11px;width:160.5px;overflow:hidden;letter-spacing:0.41px;">fstat64</div><svg style="left:2px;top:335px" width="16" height="15" viewBox="0 0 16 15"><rect x="0" y="0" width="16" height="15" fill="url(#gFi)"/><path d="M0.5 0v15M15.5 0v15M0 14.5h16" stroke="#3a80e6"/><rect x="0" y="0" width="16" height="2" fill="url(#gTb)"/><path d="M4 12.5q1.5 0 2-2l1.8-6.5q0.6-1.8 3.2-1.8" stroke="#0a1a40" stroke-width="1.15" fill="none"/><path d="M6 6.800000000000001h4.5" stroke="#0a1a40" stroke-width="1"/></svg><div class="t" style="left:23.5px;top:337.7px;font-size:11px;width:160.5px;overflow:hidden;letter-spacing:0.34px;">std::ios_base::Init::~Init()</div><svg style="left:2px;top:350px" width="16" height="15" viewBox="0 0 16 15"><rect x="0" y="0" width="16" height="15" fill="url(#gFi)"/><path d="M0.5 0v15M15.5 0v15M0 14.5h16" stroke="#3a80e6"/><rect x="0" y="0" width="16" height="2" fill="url(#gTb)"/><path d="M4 12.5q1.5 0 2-2l1.8-6.5q0.6-1.8 3.2-1.8" stroke="#0a1a40" stroke-width="1.15" fill="none"/><path d="M6 6.800000000000001h4.5" stroke="#0a1a40" stroke-width="1"/></svg><div class="t" style="left:23.5px;top:352.7px;font-size:11px;width:160.5px;overflow:hidden;letter-spacing:0.34px;">std::ios_base::Init::~Init()</div><svg style="left:2px;top:365px" width="16" height="15" viewBox="0 0 16 15"><rect x="0" y="0" width="16" height="15" fill="url(#gFi)"/><path d="M0.5 0v15M15.5 0v15M0 14.5h16" stroke="#3a80e6"/><rect x="0" y="0" width="16" height="2" fill="url(#gTb)"/><path d="M4 12.5q1.5 0 2-2l1.8-6.5q0.6-1.8 3.2-1.8" stroke="#0a1a40" stroke-width="1.15" fill="none"/><path d="M6 6.800000000000001h4.5" stroke="#0a1a40" stroke-width="1"/></svg><div class="t" style="left:23.5px;top:367.7px;font-size:11px;width:160.5px;overflow:hidden;letter-spacing:0.23px;">std::ios_base::Init::Init(void)</div><svg style="left:2px;top:380px" width="16" height="15" viewBox="0 0 16 15"><rect x="0" y="0" width="16" height="15" fill="url(#gFi)"/><path d="M0.5 0v15M15.5 0v15M0 14.5h16" stroke="#3a80e6"/><rect x="0" y="0" width="16" height="2" fill="url(#gTb)"/><path d="M4 12.5q1.5 0 2-2l1.8-6.5q0.6-1.8 3.2-1.8" stroke="#0a1a40" stroke-width="1.15" fill="none"/><path d="M6 6.800000000000001h4.5" stroke="#0a1a40" stroke-width="1"/></svg><div class="t" style="left:23.5px;top:382.7px;font-size:11px;width:160.5px;overflow:hidden;letter-spacing:0.15px;">std::ios_base::sync_with_stdio(bool)</div><svg style="left:2px;top:395px" width="16" height="15" viewBox="0 0 16 15"><rect x="0" y="0" width="16" height="15" fill="url(#gFi)"/><path d="M0.5 0v15M15.5 0v15M0 14.5h16" stroke="#3a80e6"/><rect x="0" y="0" width="16" height="2" fill="url(#gTb)"/><path d="M4 12.5q1.5 0 2-2l1.8-6.5q0.6-1.8 3.2-1.8" stroke="#0a1a40" stroke-width="1.15" fill="none"/><path d="M6 6.800000000000001h4.5" stroke="#0a1a40" stroke-width="1"/></svg><div class="t" style="left:23.5px;top:397.7px;font-size:11px;width:160.5px;overflow:hidden;letter-spacing:0.23px;">std::ios_base::Init::Init(void)</div><svg style="left:2px;top:410px" width="16" height="15" viewBox="0 0 16 15"><rect x="0" y="0" width="16" height="15" fill="url(#gFi)"/><path d="M0.5 0v15M15.5 0v15M0 14.5h16" stroke="#3a80e6"/><rect x="0" y="0" width="16" height="2" fill="url(#gTb)"/><path d="M4 12.5q1.5 0 2-2l1.8-6.5q0.6-1.8 3.2-1.8" stroke="#0a1a40" stroke-width="1.15" fill="none"/><path d="M6 6.800000000000001h4.5" stroke="#0a1a40" stroke-width="1"/></svg><div class="t" style="left:23.5px;top:412.7px;font-size:11px;width:160.5px;overflow:hidden;letter-spacing:0.12px;">std::locale::locale(std::locale::_Impl *)</div><svg style="left:2px;top:425px" width="16" height="15" viewBox="0 0 16 15"><rect x="0" y="0" width="16" height="15" fill="url(#gFi)"/><path d="M0.5 0v15M15.5 0v15M0 14.5h16" stroke="#3a80e6"/><rect x="0" y="0" width="16" height="2" fill="url(#gTb)"/><path d="M4 12.5q1.5 0 2-2l1.8-6.5q0.6-1.8 3.2-1.8" stroke="#0a1a40" stroke-width="1.15" fill="none"/><path d="M6 6.800000000000001h4.5" stroke="#0a1a40" stroke-width="1"/></svg><div class="t" style="left:23.5px;top:427.7px;font-size:11px;width:160.5px;overflow:hidden;letter-spacing:0.12px;">std::locale::locale(std::locale::_Impl *)</div><svg style="left:2px;top:440px" width="16" height="15" viewBox="0 0 16 15"><rect x="0" y="0" width="16" height="15" fill="url(#gFi)"/><path d="M0.5 0v15M15.5 0v15M0 14.5h16" stroke="#3a80e6"/><rect x="0" y="0" width="16" height="2" fill="url(#gTb)"/><path d="M4 12.5q1.5 0 2-2l1.8-6.5q0.6-1.8 3.2-1.8" stroke="#0a1a40" stroke-width="1.15" fill="none"/><path d="M6 6.800000000000001h4.5" stroke="#0a1a40" stroke-width="1"/></svg><div class="t" style="left:23.5px;top:442.7px;font-size:11px;width:160.5px;overflow:hidden;letter-spacing:0.15px;">std::locale::facet::_S_get_c_name(void)</div><svg style="left:2px;top:455px" width="16" height="15" viewBox="0 0 16 15"><rect x="0" y="0" width="16" height="15" fill="url(#gFi)"/><path d="M0.5 0v15M15.5 0v15M0 14.5h16" stroke="#3a80e6"/><rect x="0" y="0" width="16" height="2" fill="url(#gTb)"/><path d="M4 12.5q1.5 0 2-2l1.8-6.5q0.6-1.8 3.2-1.8" stroke="#0a1a40" stroke-width="1.15" fill="none"/><path d="M6 6.800000000000001h4.5" stroke="#0a1a40" stroke-width="1"/></svg><div class="t" style="left:23.5px;top:457.7px;font-size:11px;width:160.5px;overflow:hidden;letter-spacing:0.07px;">std::locale::id::_M_id(void)</div><div class="a" style="left:185px;top:147px;width:16px;height:322px;background:#f0f0f0;"></div><svg style="left:188px;top:152px" width="10" height="8"><path d="M1 6l4-4 4 4" stroke="#505050" fill="none" stroke-width="1.8"/></svg><div class="a" style="left:185px;top:165px;width:15px;height:18px;background:#c4c4c4;"></div><div class="a" style="left:201px;top:144px;width:1px;height:2px;background:#f0f0f0;"></div><div class="a" style="left:206px;top:114px;width:137px;height:24px;background:#fff;"></div><div class="a" style="left:206px;top:114px;width:1px;height:24px;background:#d8d8d8;"></div><div class="a" style="left:206px;top:114px;width:137px;height:1px;background:#d8d8d8;"></div><div class="a" style="left:343px;top:116px;width:607px;height:22px;background:#f0f0f0;"></div><div class="a" style="left:343px;top:116px;width:607px;height:1px;background:#dadada;"></div><div class="a" style="left:343px;top:138px;width:607px;height:1px;background:#0078d7;"></div><div class="a" style="left:477px;top:118px;width:1px;height:19px;background:#d8d8d8;"></div><div class="a" style="left:613px;top:118px;width:1px;height:19px;background:#d8d8d8;"></div><div class="a" style="left:749px;top:118px;width:1px;height:19px;background:#d8d8d8;"></div><div class="a" style="left:885px;top:118px;width:1px;height:19px;background:#d8d8d8;"></div><svg style="left:218px;top:117px" width="16" height="16" viewBox="0 0 16 16"><rect x="0.5" y="0.5" width="13" height="13" fill="#e8faff" stroke="#3a8ae8"/><rect x="1" y="1" width="12" height="2" fill="#3070e0"/><rect x="5.5" y="3.5" width="10" height="12" fill="#fff" stroke="#2a5a9a"/><path d="M7 5.5h4M9 7.5h5M9 9.5h5M7 11.5h4M9 13.5h5" stroke="#3a4250"/></svg><div class="t" style="left:241.3px;top:122px;width:64px;text-align:center;font-size:11px;letter-spacing:-0.1px">IDA View-A</div><svg style="left:314px;top:119px" width="14" height="14" viewBox="0 0 14 14"><rect x="0.5" y="0.5" width="13" height="13" rx="1.5" fill="#e8804c" stroke="#d83a24"/><path d="M4 4l6 6M10 4l-6 6" stroke="#fff" stroke-width="2"/></svg><svg style="left:354px;top:118px" width="16" height="16" viewBox="0 0 16 16"><defs><linearGradient id="tb" x1="0" x2="1"><stop offset="0" stop-color="#40d0ff"/><stop offset="1" stop-color="#2040d0"/></linearGradient></defs><rect x="0.5" y="0.5" width="14" height="14" fill="#f4fcff" stroke="#2a78e0"/><rect x="1" y="1" width="13" height="2" fill="url(#tb)"/><path d="M7.5 4.2l3.8 2.1v4.4l-3.8 2.1-3.8-2.1v-4.4z" fill="#e0ecff" stroke="#2020f0" stroke-width="1.2"/></svg><div class="t" style="left:377px;top:123px;width:64px;text-align:center;font-size:11px;letter-spacing:-0.1px">Hex View-1</div><svg style="left:450px;top:120px" width="14" height="14" viewBox="0 0 14 14"><rect x="0.5" y="0.5" width="13" height="13" rx="1.5" fill="#cacaca" stroke="#a8a8a8"/><path d="M4 4l6 6M10 4l-6 6" stroke="#fff" stroke-width="2"/></svg><svg style="left:490px;top:118px" width="16" height="16" viewBox="0 0 16 16"><defs><linearGradient id="tb" x1="0" x2="1"><stop offset="0" stop-color="#40d0ff"/><stop offset="1" stop-color="#2040d0"/></linearGradient></defs><rect x="0.5" y="0.5" width="14" height="14" fill="#f4fcff" stroke="#2a78e0"/><rect x="1" y="1" width="13" height="2" fill="url(#tb)"/><path d="M5 12.5l2-8h1.5l2 8M6 9h3.5M6.3 5.5h2.6" stroke="#102860" stroke-width="1.3" fill="none"/></svg><div class="t" style="left:513px;top:123px;width:64px;text-align:center;font-size:11px;letter-spacing:-0.1px">Structures</div><svg style="left:586px;top:120px" width="14" height="14" viewBox="0 0 14 14"><rect x="0.5" y="0.5" width="13" height="13" rx="1.5" fill="#cacaca" stroke="#a8a8a8"/><path d="M4 4l6 6M10 4l-6 6" stroke="#fff" stroke-width="2"/></svg><svg style="left:626px;top:118px" width="16" height="16" viewBox="0 0 16 16"><defs><linearGradient id="tb" x1="0" x2="1"><stop offset="0" stop-color="#40d0ff"/><stop offset="1" stop-color="#2040d0"/></linearGradient></defs><rect x="0.5" y="0.5" width="14" height="14" fill="#f4fcff" stroke="#2a78e0"/><rect x="1" y="1" width="13" height="2" fill="url(#tb)"/><path d="M5.5 5v2M4.5 6h2M5.5 9v2M4.5 10h2M5.5 13v2M4.5 14h2" stroke="#00c8f0" stroke-width="1.2"/><path d="M4.5 6h2M4.5 10h2M4.5 14h2" stroke="#103090" stroke-width="0.6"/><path d="M8 6.5h3M8 10.5h3M8 14.5h3" stroke="#1040b0" stroke-width="1.3"/></svg><div class="t" style="left:649px;top:123px;width:64px;text-align:center;font-size:11px;letter-spacing:-0.1px">Enums</div><svg style="left:722px;top:120px" width="14" height="14" viewBox="0 0 14 14"><rect x="0.5" y="0.5" width="13" height="13" rx="1.5" fill="#cacaca" stroke="#a8a8a8"/><path d="M4 4l6 6M10 4l-6 6" stroke="#fff" stroke-width="2"/></svg><svg style="left:762px;top:118px" width="16" height="16" viewBox="0 0 16 16"><defs><linearGradient id="tb" x1="0" x2="1"><stop offset="0" stop-color="#40d0ff"/><stop offset="1" stop-color="#2040d0"/></linearGradient></defs><rect x="0.5" y="0.5" width="14" height="14" fill="#f4fcff" stroke="#2a78e0"/><rect x="1" y="1" width="13" height="2" fill="url(#tb)"/><rect x="6.5" y="7.5" width="9" height="8" fill="#fff" stroke="#2a5a9a"/><path d="M9 9.5h5M9 11.5h5M9 13.5h5" stroke="#1020a0"/><path d="M1.5 4.5l3 1.5 1-1.5 3 4-3 3-1-2-1-0.5z" fill="#30c030" stroke="#106010" stroke-width="0.8"/></svg><div class="t" style="left:785px;top:123px;width:64px;text-align:center;font-size:11px;letter-spacing:-0.1px">Imports</div><svg style="left:858px;top:120px" width="14" height="14" viewBox="0 0 14 14"><rect x="0.5" y="0.5" width="13" height="13" rx="1.5" fill="#cacaca" stroke="#a8a8a8"/><path d="M4 4l6 6M10 4l-6 6" stroke="#fff" stroke-width="2"/></svg><svg style="left:898px;top:118px" width="16" height="16" viewBox="0 0 16 16"><defs><linearGradient id="tb" x1="0" x2="1"><stop offset="0" stop-color="#40d0ff"/><stop offset="1" stop-color="#2040d0"/></linearGradient></defs><rect x="0.5" y="0.5" width="14" height="14" fill="#f4fcff" stroke="#2a78e0"/><rect x="1" y="1" width="13" height="2" fill="url(#tb)"/><rect x="0.5" y="7.5" width="9" height="8" fill="#fff" stroke="#2a5a9a"/><path d="M3 9.5h4M3 11.5h4M3 13.5h4" stroke="#1020a0"/><path d="M7 11l2-3h2l0-2 3.5 3-3.5 3v-2h-1.5z" fill="#30c030" stroke="#106010" stroke-width="0.8"/></svg><div class="t" style="left:921px;top:123px;width:64px;text-align:center;font-size:11px;letter-spacing:-0.1px">Exports</div><svg style="left:994px;top:120px" width="14" height="14" viewBox="0 0 14 14"><rect x="0.5" y="0.5" width="13" height="13" rx="1.5" fill="#cacaca" stroke="#a8a8a8"/><path d="M4 4l6 6M10 4l-6 6" stroke="#fff" stroke-width="2"/></svg><div class="a" style="left:206px;top:138px;width:744px;height:331px;background:#fff;"></div><div class="a" style="left:281px;top:138px;width:3px;height:331px;background:#f0f0f0;"></div><div class="a" style="left:285px;top:138px;width:665px;height:1px;background:#0078d7;"></div><div class="a" style="left:285px;top:138px;width:1px;height:331px;background:#0078d7;"></div><div class="a" style="left:287px;top:214px;width:663px;height:15px;background:#e4e4e4;"></div><div class="a" style="left:270px;top:139px;width:6px;height:6px;border-radius:3px;background:#5ac8fa"></div><div class="a" style="left:270px;top:168px;width:6px;height:6px;border-radius:3px;background:#5ac8fa"></div><div class="a" style="left:270px;top:213px;width:6px;height:6px;border-radius:3px;background:#5ac8fa"></div><div class="a" style="left:270px;top:243px;width:6px;height:6px;border-radius:3px;background:#5ac8fa"></div><div class="a" style="left:270px;top:273px;width:6px;height:6px;border-radius:3px;background:#5ac8fa"></div><div class="a" style="left:270px;top:303px;width:6px;height:6px;border-radius:3px;background:#5ac8fa"></div><div class="a" style="left:270px;top:333px;width:6px;height:6px;border-radius:3px;background:#5ac8fa"></div><div class="a" style="left:270px;top:363px;width:6px;height:6px;border-radius:3px;background:#5ac8fa"></div><div class="a" style="left:270px;top:393px;width:6px;height:6px;border-radius:3px;background:#5ac8fa"></div><div class="a" style="left:270px;top:408px;width:6px;height:6px;border-radius:3px;background:#5ac8fa"></div><div class="a" style="left:270px;top:423px;width:6px;height:6px;border-radius:3px;background:#5ac8fa"></div><div class="a" style="left:270px;top:468px;width:6px;height:6px;border-radius:3px;background:#5ac8fa"></div><div class="t mono" style="left:301.00px;top:143px;font-size:11.85px;letter-spacing:-0.11px;color:#808080">4E1</div><div class="t mono" style="left:329.00px;top:143px;font-size:11.85px;letter-spacing:-0.11px;color:#000080">aCI0p</div><div class="t mono" style="left:441.00px;top:143px;font-size:11.85px;letter-spacing:-0.11px;color:#000080">db</div><div class="t mono" style="left:462.00px;top:143px;font-size:11.85px;letter-spacing:-0.11px;color:#000080">&#x27;</div><div class="t mono" style="left:469.00px;top:143px;font-size:11.85px;letter-spacing:-0.11px;color:#008000">C_I_0P</div><div class="t mono" style="left:511.00px;top:143px;font-size:11.85px;letter-spacing:-0.11px;color:#000080">&#x27;</div><div class="t mono" style="left:518.00px;top:143px;font-size:11.85px;letter-spacing:-0.11px;color:#000080">,</div><div class="t mono" style="left:525.00px;top:143px;font-size:11.85px;letter-spacing:-0.11px;color:#008000">0</div><div class="t mono" style="left:609.00px;top:143px;font-size:11.85px;letter-spacing:-0.11px;color:#8080ff">; DATA XREF: find(char *,char const*)+14F o</div><svg style="left:896px;top:141px" width="7" height="11" viewBox="0 0 7 11"><path d="M3.5 1v9M1 3.8l2.5-2.6 2.5 2.6" stroke="#8080ff" stroke-width="1" fill="none"/></svg><div class="t mono" style="left:301.00px;top:158px;font-size:11.85px;letter-spacing:-0.11px;color:#808080">4E8</div><div class="t mono" style="left:329.00px;top:158px;font-size:11.85px;letter-spacing:-0.11px;color:#808080">; const char asc_81084E8[]</div><div class="t mono" style="left:301.00px;top:173px;font-size:11.85px;letter-spacing:-0.11px;color:#808080">4E8</div><div class="t mono" style="left:329.00px;top:173px;font-size:11.85px;letter-spacing:-0.11px;color:#000080">asc_81084E8</div><div class="t mono" style="left:441.00px;top:173px;font-size:11.85px;letter-spacing:-0.11px;color:#000080">db</div><div class="t mono" style="left:462.00px;top:173px;font-size:11.85px;letter-spacing:-0.11px;color:#000080">&#x27;</div><div class="t mono" style="left:469.00px;top:173px;font-size:11.85px;letter-spacing:-0.11px;color:#008000">*.*</div><div class="t mono" style="left:490.00px;top:173px;font-size:11.85px;letter-spacing:-0.11px;color:#000080">&#x27;</div><div class="t mono" style="left:497.00px;top:173px;font-size:11.85px;letter-spacing:-0.11px;color:#000080">,</div><div class="t mono" style="left:504.00px;top:173px;font-size:11.85px;letter-spacing:-0.11px;color:#008000">0</div><div class="t mono" style="left:609.00px;top:173px;font-size:11.85px;letter-spacing:-0.11px;color:#8080ff">; DATA XREF: do_heartbeat(void)+6 o</div><svg style="left:840px;top:171px" width="7" height="11" viewBox="0 0 7 11"><path d="M3.5 1v9M1 3.8l2.5-2.6 2.5 2.6" stroke="#8080ff" stroke-width="1" fill="none"/></svg><div class="t mono" style="left:301.00px;top:188px;font-size:11.85px;letter-spacing:-0.11px;color:#808080">4E8</div><div class="t mono" style="left:609.00px;top:188px;font-size:11.85px;letter-spacing:-0.11px;color:#8080ff">; do_heartbeat(void)+1A o ...</div><svg style="left:770px;top:186px" width="7" height="11" viewBox="0 0 7 11"><path d="M3.5 1v9M1 3.8l2.5-2.6 2.5 2.6" stroke="#8080ff" stroke-width="1" fill="none"/></svg><div class="t mono" style="left:301.00px;top:203px;font-size:11.85px;letter-spacing:-0.11px;color:#0000ff">4EC</div><div class="t mono" style="left:329.00px;top:203px;font-size:11.85px;letter-spacing:-0.11px;color:#808080">; const char aOpt[]</div><div class="t mono" style="left:301.00px;top:218px;font-size:11.85px;letter-spacing:-0.11px;color:#0000ff">4EC</div><div class="t mono" style="left:329.00px;top:218px;font-size:11.85px;letter-spacing:-0.11px;color:#000080">aOpt</div><div class="t mono" style="left:441.00px;top:218px;font-size:11.85px;letter-spacing:-0.11px;color:#000080">db</div><div class="t mono" style="left:462.00px;top:218px;font-size:11.85px;letter-spacing:-0.11px;color:#000080">&#x27;</div><div class="t mono" style="left:469.00px;top:218px;font-size:11.85px;letter-spacing:-0.11px;color:#008000">/opt</div><div class="t mono" style="left:497.00px;top:218px;font-size:11.85px;letter-spacing:-0.11px;color:#000080">&#x27;</div><div class="t mono" style="left:504.00px;top:218px;font-size:11.85px;letter-spacing:-0.11px;color:#000080">,</div><div class="t mono" style="left:511.00px;top:218px;font-size:11.85px;letter-spacing:-0.11px;color:#008000">0</div><div class="t mono" style="left:609.00px;top:218px;font-size:11.85px;letter-spacing:-0.11px;color:#8080ff">; DATA XREF: do_heartbeat(void)+E o</div><svg style="left:840px;top:216px" width="7" height="11" viewBox="0 0 7 11"><path d="M3.5 1v9M1 3.8l2.5-2.6 2.5 2.6" stroke="#8080ff" stroke-width="1" fill="none"/></svg><div class="t mono" style="left:301.00px;top:233px;font-size:11.85px;letter-spacing:-0.11px;color:#808080">4F1</div><div class="t mono" style="left:329.00px;top:233px;font-size:11.85px;letter-spacing:-0.11px;color:#808080">; const char aU01[]</div><div class="t mono" style="left:301.00px;top:248px;font-size:11.85px;letter-spacing:-0.11px;color:#808080">4F1</div><div class="t mono" style="left:329.00px;top:248px;font-size:11.85px;letter-spacing:-0.11px;color:#000080">aU01</div><div class="t mono" style="left:441.00px;top:248px;font-size:11.85px;letter-spacing:-0.11px;color:#000080">db</div><div class="t mono" style="left:462.00px;top:248px;font-size:11.85px;letter-spacing:-0.11px;color:#000080">&#x27;</div><div class="t mono" style="left:469.00px;top:248px;font-size:11.85px;letter-spacing:-0.11px;color:#008000">/u01</div><div class="t mono" style="left:497.00px;top:248px;font-size:11.85px;letter-spacing:-0.11px;color:#000080">&#x27;</div><div class="t mono" style="left:504.00px;top:248px;font-size:11.85px;letter-spacing:-0.11px;color:#000080">,</div><div class="t mono" style="left:511.00px;top:248px;font-size:11.85px;letter-spacing:-0.11px;color:#008000">0</div><div class="t mono" style="left:609.00px;top:248px;font-size:11.85px;letter-spacing:-0.11px;color:#8080ff">; DATA XREF: do_heartbeat(void)+22 o</div><svg style="left:847px;top:246px" width="7" height="11" viewBox="0 0 7 11"><path d="M3.5 1v9M1 3.8l2.5-2.6 2.5 2.6" stroke="#8080ff" stroke-width="1" fill="none"/></svg><div class="t mono" style="left:301.00px;top:263px;font-size:11.85px;letter-spacing:-0.11px;color:#808080">4F6</div><div class="t mono" style="left:329.00px;top:263px;font-size:11.85px;letter-spacing:-0.11px;color:#808080">; const char aU02[]</div><div class="t mono" style="left:301.00px;top:278px;font-size:11.85px;letter-spacing:-0.11px;color:#808080">4F6</div><div class="t mono" style="left:329.00px;top:278px;font-size:11.85px;letter-spacing:-0.11px;color:#000080">aU02</div><div class="t mono" style="left:441.00px;top:278px;font-size:11.85px;letter-spacing:-0.11px;color:#000080">db</div><div class="t mono" style="left:462.00px;top:278px;font-size:11.85px;letter-spacing:-0.11px;color:#000080">&#x27;</div><div class="t mono" style="left:469.00px;top:278px;font-size:11.85px;letter-spacing:-0.11px;color:#008000">/u02</div><div class="t mono" style="left:497.00px;top:278px;font-size:11.85px;letter-spacing:-0.11px;color:#000080">&#x27;</div><div class="t mono" style="left:504.00px;top:278px;font-size:11.85px;letter-spacing:-0.11px;color:#000080">,</div><div class="t mono" style="left:511.00px;top:278px;font-size:11.85px;letter-spacing:-0.11px;color:#008000">0</div><div class="t mono" style="left:609.00px;top:278px;font-size:11.85px;letter-spacing:-0.11px;color:#8080ff">; DATA XREF: do_heartbeat(void)+36 o</div><svg style="left:847px;top:276px" width="7" height="11" viewBox="0 0 7 11"><path d="M3.5 1v9M1 3.8l2.5-2.6 2.5 2.6" stroke="#8080ff" stroke-width="1" fill="none"/></svg><div class="t mono" style="left:301.00px;top:293px;font-size:11.85px;letter-spacing:-0.11px;color:#808080">4FB</div><div class="t mono" style="left:329.00px;top:293px;font-size:11.85px;letter-spacing:-0.11px;color:#808080">; const char aU03[]</div><div class="t mono" style="left:301.00px;top:308px;font-size:11.85px;letter-spacing:-0.11px;color:#808080">4FB</div><div class="t mono" style="left:329.00px;top:308px;font-size:11.85px;letter-spacing:-0.11px;color:#000080">aU03</div><div class="t mono" style="left:441.00px;top:308px;font-size:11.85px;letter-spacing:-0.11px;color:#000080">db</div><div class="t mono" style="left:462.00px;top:308px;font-size:11.85px;letter-spacing:-0.11px;color:#000080">&#x27;</div><div class="t mono" style="left:469.00px;top:308px;font-size:11.85px;letter-spacing:-0.11px;color:#008000">/u03</div><div class="t mono" style="left:497.00px;top:308px;font-size:11.85px;letter-spacing:-0.11px;color:#000080">&#x27;</div><div class="t mono" style="left:504.00px;top:308px;font-size:11.85px;letter-spacing:-0.11px;color:#000080">,</div><div class="t mono" style="left:511.00px;top:308px;font-size:11.85px;letter-spacing:-0.11px;color:#008000">0</div><div class="t mono" style="left:609.00px;top:308px;font-size:11.85px;letter-spacing:-0.11px;color:#8080ff">; DATA XREF: do_heartbeat(void)+4A o</div><svg style="left:847px;top:306px" width="7" height="11" viewBox="0 0 7 11"><path d="M3.5 1v9M1 3.8l2.5-2.6 2.5 2.6" stroke="#8080ff" stroke-width="1" fill="none"/></svg><div class="t mono" style="left:301.00px;top:323px;font-size:11.85px;letter-spacing:-0.11px;color:#808080">500</div><div class="t mono" style="left:329.00px;top:323px;font-size:11.85px;letter-spacing:-0.11px;color:#808080">; const char aU04[]</div><div class="t mono" style="left:301.00px;top:338px;font-size:11.85px;letter-spacing:-0.11px;color:#808080">500</div><div class="t mono" style="left:329.00px;top:338px;font-size:11.85px;letter-spacing:-0.11px;color:#000080">aU04</div><div class="t mono" style="left:441.00px;top:338px;font-size:11.85px;letter-spacing:-0.11px;color:#000080">db</div><div class="t mono" style="left:462.00px;top:338px;font-size:11.85px;letter-spacing:-0.11px;color:#000080">&#x27;</div><div class="t mono" style="left:469.00px;top:338px;font-size:11.85px;letter-spacing:-0.11px;color:#008000">/u04</div><div class="t mono" style="left:497.00px;top:338px;font-size:11.85px;letter-spacing:-0.11px;color:#000080">&#x27;</div><div class="t mono" style="left:504.00px;top:338px;font-size:11.85px;letter-spacing:-0.11px;color:#000080">,</div><div class="t mono" style="left:511.00px;top:338px;font-size:11.85px;letter-spacing:-0.11px;color:#008000">0</div><div class="t mono" style="left:609.00px;top:338px;font-size:11.85px;letter-spacing:-0.11px;color:#8080ff">; DATA XREF: do_heartbeat(void)+5E o</div><svg style="left:847px;top:336px" width="7" height="11" viewBox="0 0 7 11"><path d="M3.5 1v9M1 3.8l2.5-2.6 2.5 2.6" stroke="#8080ff" stroke-width="1" fill="none"/></svg><div class="t mono" style="left:301.00px;top:353px;font-size:11.85px;letter-spacing:-0.11px;color:#808080">505</div><div class="t mono" style="left:329.00px;top:353px;font-size:11.85px;letter-spacing:-0.11px;color:#808080">; const char aHome[]</div><div class="t mono" style="left:301.00px;top:368px;font-size:11.85px;letter-spacing:-0.11px;color:#808080">505</div><div class="t mono" style="left:329.00px;top:368px;font-size:11.85px;letter-spacing:-0.11px;color:#000080">aHome</div><div class="t mono" style="left:441.00px;top:368px;font-size:11.85px;letter-spacing:-0.11px;color:#000080">db</div><div class="t mono" style="left:462.00px;top:368px;font-size:11.85px;letter-spacing:-0.11px;color:#000080">&#x27;</div><div class="t mono" style="left:469.00px;top:368px;font-size:11.85px;letter-spacing:-0.11px;color:#008000">/home</div><div class="t mono" style="left:504.00px;top:368px;font-size:11.85px;letter-spacing:-0.11px;color:#000080">&#x27;</div><div class="t mono" style="left:511.00px;top:368px;font-size:11.85px;letter-spacing:-0.11px;color:#000080">,</div><div class="t mono" style="left:518.00px;top:368px;font-size:11.85px;letter-spacing:-0.11px;color:#008000">0</div><div class="t mono" style="left:609.00px;top:368px;font-size:11.85px;letter-spacing:-0.11px;color:#8080ff">; DATA XREF: do_heartbeat(void)+72 o</div><svg style="left:847px;top:366px" width="7" height="11" viewBox="0 0 7 11"><path d="M3.5 1v9M1 3.8l2.5-2.6 2.5 2.6" stroke="#8080ff" stroke-width="1" fill="none"/></svg><div class="t mono" style="left:301.00px;top:383px;font-size:11.85px;letter-spacing:-0.11px;color:#808080">50B</div><div class="t mono" style="left:329.00px;top:383px;font-size:11.85px;letter-spacing:-0.11px;color:#808080">; const char aRoot[]</div><div class="t mono" style="left:301.00px;top:398px;font-size:11.85px;letter-spacing:-0.11px;color:#808080">50B</div><div class="t mono" style="left:329.00px;top:398px;font-size:11.85px;letter-spacing:-0.11px;color:#000080">aRoot</div><div class="t mono" style="left:441.00px;top:398px;font-size:11.85px;letter-spacing:-0.11px;color:#000080">db</div><div class="t mono" style="left:462.00px;top:398px;font-size:11.85px;letter-spacing:-0.11px;color:#000080">&#x27;</div><div class="t mono" style="left:469.00px;top:398px;font-size:11.85px;letter-spacing:-0.11px;color:#008000">/root</div><div class="t mono" style="left:504.00px;top:398px;font-size:11.85px;letter-spacing:-0.11px;color:#000080">&#x27;</div><div class="t mono" style="left:511.00px;top:398px;font-size:11.85px;letter-spacing:-0.11px;color:#000080">,</div><div class="t mono" style="left:518.00px;top:398px;font-size:11.85px;letter-spacing:-0.11px;color:#008000">0</div><div class="t mono" style="left:609.00px;top:398px;font-size:11.85px;letter-spacing:-0.11px;color:#8080ff">; DATA XREF: do_heartbeat(void)+86 o</div><svg style="left:847px;top:396px" width="7" height="11" viewBox="0 0 7 11"><path d="M3.5 1v9M1 3.8l2.5-2.6 2.5 2.6" stroke="#8080ff" stroke-width="1" fill="none"/></svg><div class="t mono" style="left:301.00px;top:413px;font-size:11.85px;letter-spacing:-0.11px;color:#808080">511</div><div class="t mono" style="left:441.00px;top:413px;font-size:11.85px;letter-spacing:-0.11px;color:#000080">align 4</div><div class="t mono" style="left:301.00px;top:428px;font-size:11.85px;letter-spacing:-0.11px;color:#808080">514</div><div class="t mono" style="left:329.00px;top:428px;font-size:11.85px;letter-spacing:-0.11px;color:#000080">aJfkdskfku2ir32</div><div class="t mono" style="left:441.00px;top:428px;font-size:11.85px;letter-spacing:-0.11px;color:#000080">db</div><div class="t mono" style="left:462.00px;top:428px;font-size:11.85px;letter-spacing:-0.11px;color:#000080">&#x27;</div><div class="t mono" style="left:469.00px;top:428px;font-size:11.85px;letter-spacing:-0.11px;color:#008000">Jfkdskfku2ir32y7432uroduw8y7318i9018urewfdsZ2Oaifwuieh~~cudsffdsd</div><div class="t mono" style="left:924.00px;top:428px;font-size:11.85px;letter-spacing:-0.11px;color:#000080">&#x27;</div><div class="t mono" style="left:301.00px;top:443px;font-size:11.85px;letter-spacing:-0.11px;color:#808080">514</div><div class="t mono" style="left:609.00px;top:443px;font-size:11.85px;letter-spacing:-0.11px;color:#8080ff">; DATA XREF: main+2A o</div><svg style="left:749px;top:441px" width="7" height="11" viewBox="0 0 7 11"><path d="M3.5 1v9M1 3.8l2.5-2.6 2.5 2.6" stroke="#8080ff" stroke-width="1" fill="none"/></svg><div class="t mono" style="left:301.00px;top:458px;font-size:11.85px;letter-spacing:-0.11px;color:#808080">555</div><div class="t mono" style="left:441.00px;top:458px;font-size:11.85px;letter-spacing:-0.11px;color:#000080">db</div><div class="t mono" style="left:462.00px;top:458px;font-size:11.85px;letter-spacing:-0.11px;color:#008000">0</div><div class="a" style="left:314px;top:211px;width:227px;height:205px;border:3px solid #ff0000"></div></body></html>
